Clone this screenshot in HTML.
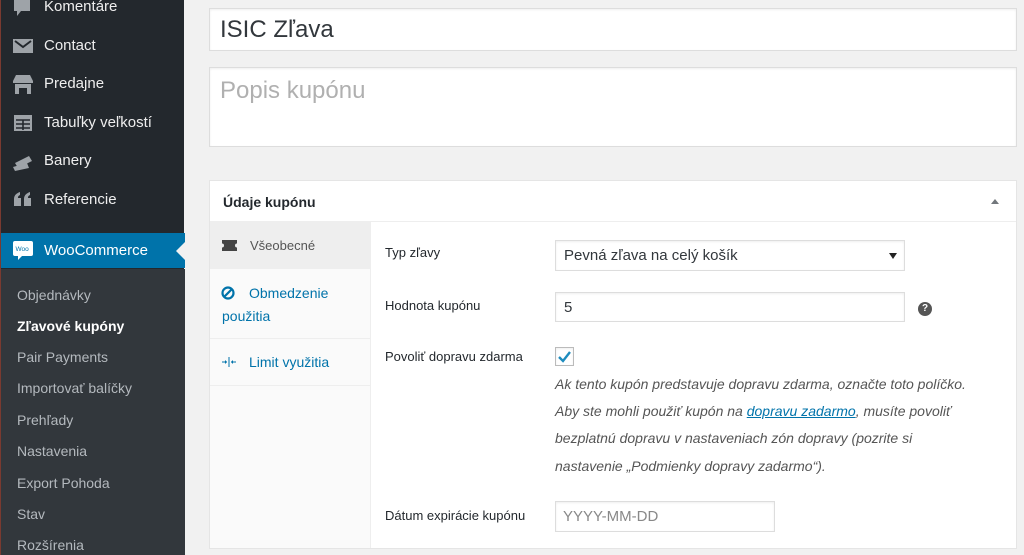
<!DOCTYPE html>
<html><head><meta charset="utf-8"><style>
*{box-sizing:border-box;margin:0;padding:0}
body{width:1024px;height:555px;overflow:hidden;background:#f1f1f1;font-family:"Liberation Sans",sans-serif;position:relative}
.sb{position:absolute;left:0;top:0;width:184px;height:555px;background:#23282d;border-left:1px solid #7a3a30}
.mi{position:absolute;left:0;width:184px;height:36px;color:#eee;font-size:15px;line-height:36px;padding-left:43px}
.mi svg{position:absolute;left:11px;top:8px}
.woo{background:#0073aa;color:#fff}
.sub{position:absolute;left:0;top:269px;width:184px;height:286px;background:#32373c}
.si{position:absolute;left:16px;color:#b4b9be;font-size:14px;line-height:20px}
.abs{position:absolute}
.inp{position:absolute;background:#fff;border:1px solid #ddd;box-shadow:inset 0 1px 2px rgba(0,0,0,.07)}
.lbl{position:absolute;left:385px;font-size:13px;color:#23282d}
.desc{position:absolute;left:555px;font-size:14px;font-style:italic;color:#555}
</style></head><body>
<div class="sb">
 <div class="mi" style="top:-11px"><svg width="20" height="22"><path d="M2 2h16v12H9l-4 5v-5H2z" fill="#9ea3a8"/></svg>Komentáre</div>
 <div class="mi" style="top:28px"><svg width="22" height="20"><rect x="1" y="3" width="20" height="14" fill="#9ea3a8"/><path d="M3 5l8 6 8-6" stroke="#23282d" stroke-width="2" fill="none"/></svg>Contact</div>
 <div class="mi" style="top:66px"><svg width="22" height="22"><path d="M1 7l3-6h14l3 6v2H1z M3 10h16v10h-4v-6H7v6H3z" fill="#9ea3a8"/></svg>Predajne</div>
 <div class="mi" style="top:105px"><svg width="22" height="20"><rect x="2" y="2" width="18" height="16" fill="#9ea3a8"/><path d="M4 7h14M4 11h14M4 15h14M11 7v10" stroke="#23282d" stroke-width="1.6"/></svg>Tabuľky veľkostí</div>
 <div class="mi" style="top:143px"><svg width="22" height="22"><path d="M3 12l14-7 3 5-14 7z M1 16l14-4 2 5-14 3z" fill="#9ea3a8"/></svg>Banery</div>
 <div class="mi" style="top:182px"><svg width="22" height="20"><path d="M2 9c0-4 3-6 6-7v3c-2 1-2 2-2 3h3v8H2z M12 9c0-4 3-6 6-7v3c-2 1-2 2-2 3h3v8h-7z" fill="#9ea3a8"/></svg>Referencie</div>
 <div class="mi woo" style="top:233px;height:35px;line-height:35px"><svg width="22" height="20" style="top:7px"><rect x="1" y="1" width="20" height="15" rx="2" fill="#fff"/><path d="M6 16l0 4 4-4z" fill="#fff"/><text x="3.5" y="11" font-size="6.5" fill="#0073aa" font-family="Liberation Sans">Woo</text></svg>WooCommerce
  <div class="abs" style="right:0;top:9px;border:9px solid transparent;border-right-color:#f1f1f1;border-left:0"></div></div>
 <div class="sub">
  <div class="si" style="top:16px">Objednávky</div>
  <div class="si" style="top:47px;color:#fff;font-weight:bold">Zľavové kupóny</div>
  <div class="si" style="top:78px">Pair Payments</div>
  <div class="si" style="top:109px">Importovať balíčky</div>
  <div class="si" style="top:141px">Prehľady</div>
  <div class="si" style="top:172px">Nastavenia</div>
  <div class="si" style="top:204px">Export Pohoda</div>
  <div class="si" style="top:235px">Stav</div>
  <div class="si" style="top:266px">Rozšírenia</div>
 </div>
</div>
<div class="inp" style="left:209px;top:8px;width:808px;height:43px;font-size:24px;line-height:41px;padding-left:10px;color:#32373c">ISIC Zľava</div>
<div class="inp" style="left:209px;top:67px;width:808px;height:80px;font-size:24px;line-height:46px;padding-left:10px;color:#b0b0b0">Popis kupónu</div>
<div class="abs" style="left:209px;top:180px;width:808px;height:369px;background:#fff;border:1px solid #e5e5e5">
 <div class="abs" style="left:0;top:0;width:806px;height:41px;border-bottom:1px solid #eee;font-size:14px;font-weight:bold;line-height:42px;padding-left:13px;color:#23282d">Údaje kupónu</div>
 <div class="abs" style="left:781px;top:18px;border:4px solid transparent;border-bottom:5px solid #72777c;border-top:0"></div>
 <div class="abs" style="left:0;top:41px;width:161px;height:326px;background:#fafafa;border-right:1px solid #eee">
  <div class="abs" style="left:0;top:0;width:160px;height:47px;background:#eee;font-size:13px;color:#555;line-height:47px;padding-left:40px">Všeobecné
   <svg class="abs" style="left:12px;top:18px" width="15" height="11"><path d="M0 0h15v3.5a2 2 0 0 0 0 4V11H0V7.5a2 2 0 0 0 0-4z" fill="#444"/></svg></div>
  <div class="abs" style="left:0;top:47px;width:160px;height:70px;border-bottom:1px solid #eee;font-size:14px;color:#0073aa;line-height:23px;padding:13px 0 0 12px"><span style="padding-left:27px">Obmedzenie</span><br>použitia
   <svg class="abs" style="left:11px;top:17px" width="14" height="14"><circle cx="7" cy="7" r="5.5" stroke="#0073aa" stroke-width="2.2" fill="none"/><path d="M3.5 10.5l7-7" stroke="#0073aa" stroke-width="2.2"/></svg></div>
  <div class="abs" style="left:0;top:117px;width:160px;height:47px;border-bottom:1px solid #eee;font-size:14px;color:#0073aa;line-height:47px;padding-left:39px">Limit využitia
   <svg class="abs" style="left:12px;top:18px" width="14" height="10"><path d="M7 0v10M0 5h5M9 5h5" stroke="#0073aa" stroke-width="1"/><path d="M5 5l-2-2v4z M9 5l2-2v4z" fill="#0073aa"/></svg></div>
 </div>
</div>
<div class="lbl" style="top:245px">Typ zľavy</div>
<div class="inp" style="left:555px;top:240px;width:350px;height:31px;font-size:15px;line-height:30px;padding-left:8px;color:#32373c">Pevná zľava na celý košík
 <div class="abs" style="left:333px;top:12px;border:4px solid transparent;border-top:6px solid #222;border-bottom:0"></div></div>
<div class="lbl" style="top:298px">Hodnota kupónu</div>
<div class="inp" style="left:555px;top:292px;width:350px;height:30px;font-size:15px;line-height:29px;padding-left:8px;color:#32373c">5</div>
<div class="abs" style="left:918px;top:302px;width:14px;height:14px;border-radius:50%;background:#555;color:#fff;font-size:10px;font-weight:bold;text-align:center;line-height:14px">?</div>
<div class="lbl" style="top:349px">Povoliť dopravu zdarma</div>
<div class="inp" style="left:555px;top:347px;width:19px;height:19px;border-color:#bbb"><svg width="17" height="17"><path d="M3 9l4 4 7-9" stroke="#1e8cbe" stroke-width="2.4" fill="none"/></svg></div>
<div class="desc" style="top:376px">Ak tento kupón predstavuje dopravu zdarma, označte toto políčko.</div>
<div class="desc" style="top:403px">Aby ste mohli použiť kupón na <span style="color:#0073aa;text-decoration:underline">dopravu zadarmo</span>, musíte povoliť</div>
<div class="desc" style="top:430px">bezplatnú dopravu v nastaveniach zón dopravy (pozrite si</div>
<div class="desc" style="top:458px">nastavenie „Podmienky dopravy zadarmo“).</div>
<div class="lbl" style="top:508px">Dátum expirácie kupónu</div>
<div class="inp" style="left:555px;top:501px;width:220px;height:31px;font-size:15px;line-height:30px;padding-left:7px;color:#888">YYYY-MM-DD</div>
</body></html>
